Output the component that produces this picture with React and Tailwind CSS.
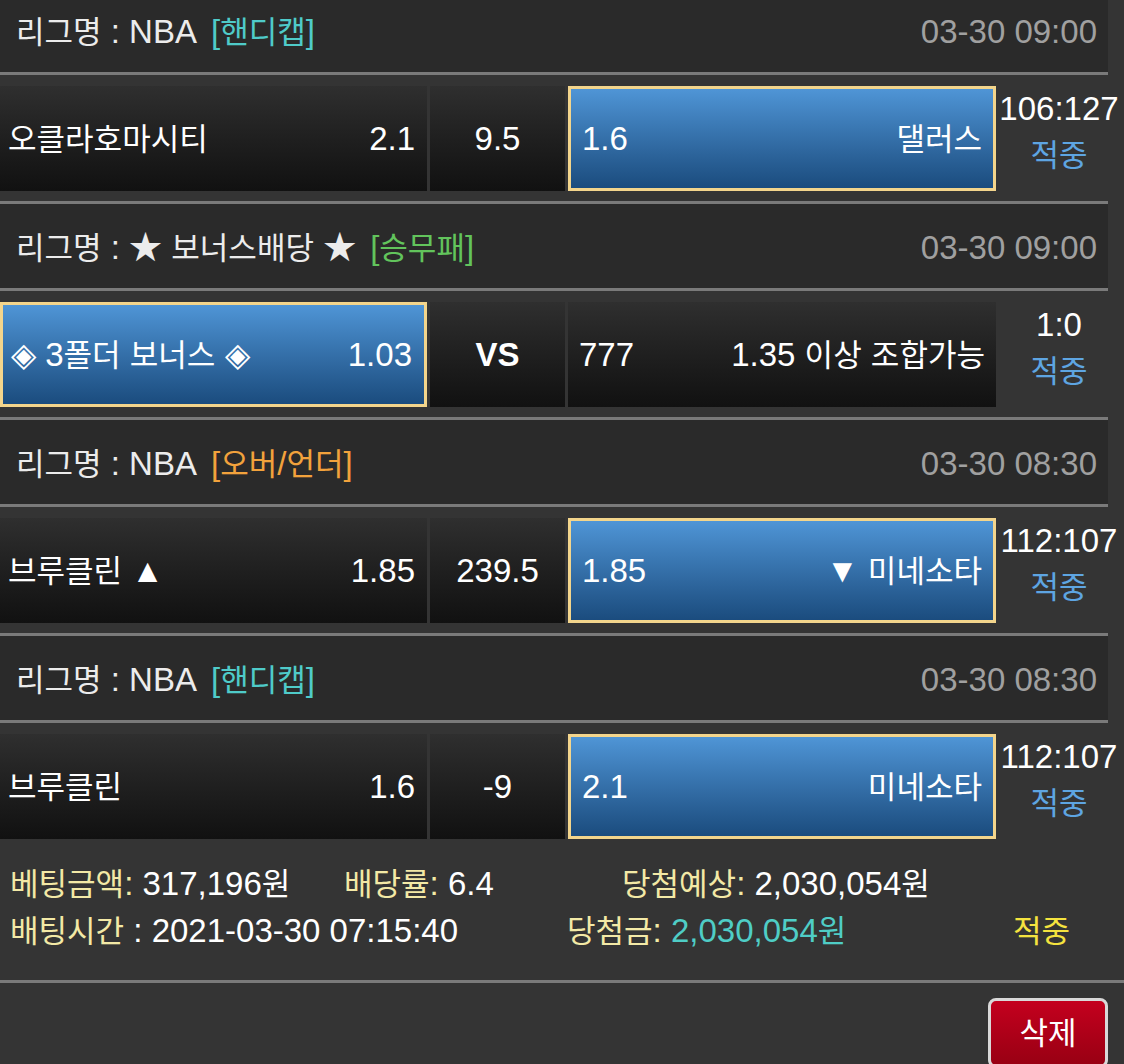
import React from 'react';

const HANGUL = /([\uac00-\ud7a3]+)/;

// hangul runs a bit smaller so they sit with the digits like the phone font does
const Txt = ({ children }) => (
    <>
        {String(children).split(HANGUL).map((part, i) =>
            HANGUL.test(part) ? <span key={i} className="text-[0.94em]">{part}</span> : part
        )}
    </>
);

const bets = [
    { league: 'NBA', type: '핸디캡', typeColor: 'text-[#4fcbc9]', time: '03-30 09:00', home: '오클라호마시티', homeOdds: '2.1', mid: '9.5', awayOdds: '1.6', away: '댈러스', pick: 'away', score: '106:127' },
    { league: '★ 보너스배당 ★', type: '승무패', typeColor: 'text-[#62c45c]', time: '03-30 09:00', home: '◈ 3폴더 보너스 ◈', homeOdds: '1.03', mid: 'VS', awayOdds: '777', away: '1.35 이상 조합가능', pick: 'home', score: '1:0' },
    { league: 'NBA', type: '오버/언더', typeColor: 'text-[#f2a23c]', time: '03-30 08:30', home: '브루클린 ▲', homeOdds: '1.85', mid: '239.5', awayOdds: '1.85', away: '▼ 미네소타', pick: 'away', score: '112:107' },
    { league: 'NBA', type: '핸디캡', typeColor: 'text-[#4fcbc9]', time: '03-30 08:30', home: '브루클린', homeOdds: '1.6', mid: '-9', awayOdds: '2.1', away: '미네소타', pick: 'away', score: '112:107' },
];

const darkCell = 'bg-linear-to-b from-[#2f2f2f] to-[#111111]';
const pickedCell = 'bg-linear-to-b from-[#4f95d6] to-[#1b4c7e] border-[3px] border-[#f3d58c]';

const BetRow = ({ bet }) => (
    <div>
        <div className="w-[1108px] h-[90px] bg-[#2a2a2a] border-y-[3px] border-[#7a7a7a] flex items-center justify-between pt-[3px] pl-4 pr-[11px]">
            <div className="text-[#ececec]">
                <Txt>{`리그명 : ${bet.league}`}</Txt>
                <span className={`ml-[14px] ${bet.typeColor}`}>[<Txt>{bet.type}</Txt>]</span>
            </div>
            <div className="text-[#a0a0a0]">{bet.time}</div>
        </div>

        <div className="flex gap-[3px] pt-[11px] pb-[10px]">
            <div className={`w-[427px] h-[105px] flex items-center justify-between pl-2 pr-3 ${bet.pick === 'home' ? pickedCell : darkCell}`}>
                <span><Txt>{bet.home}</Txt></span>
                <span>{bet.homeOdds}</span>
            </div>
            <div className={`w-[135px] h-[105px] flex items-center justify-center ${darkCell} ${bet.mid === 'VS' ? 'font-bold' : ''}`}>
                {bet.mid}
            </div>
            <div className={`w-[428px] h-[105px] flex items-center justify-between pl-[11px] pr-[11px] ${bet.pick === 'away' ? pickedCell : darkCell}`}>
                <span>{bet.awayOdds}</span>
                <span><Txt>{bet.away}</Txt></span>
            </div>
            <div className="flex-1 flex flex-col items-center leading-[46px] pr-[5px]">
                <span>{bet.score}</span>
                <span className="text-[#5ea5e2]"><Txt>적중</Txt></span>
            </div>
        </div>
    </div>
);

export default function App() {
    return (
        <div className="w-[1124px] h-[1064px] overflow-hidden bg-[#343434] text-white text-[33px] font-['Liberation_Sans','Noto_Sans_CJK_KR',sans-serif]">
            <div className="-mt-[15px]">
                {bets.map((bet, idx) => (
                    <BetRow key={idx} bet={bet} />
                ))}
            </div>

            <div className="h-[131px] pt-[12px] pl-[10px] leading-[46px]">
                <div className="flex">
                    <div className="w-[334px]">
                        <span className="text-[#f3e9a6]"><Txt>베팅금액:</Txt></span> <Txt>317,196원</Txt>
                    </div>
                    <div className="w-[278px]">
                        <span className="text-[#f3e9a6]"><Txt>배당률:</Txt></span> 6.4
                    </div>
                    <div>
                        <span className="text-[#f3e9a6]"><Txt>당첨예상:</Txt></span> <Txt>2,030,054원</Txt>
                    </div>
                </div>
                <div className="flex">
                    <div className="w-[557px]">
                        <span className="text-[#f3e9a6]"><Txt>배팅시간</Txt></span> : 2021-03-30 07:15:40
                    </div>
                    <div className="w-[446px]">
                        <span className="text-[#f3e9a6]"><Txt>당첨금:</Txt></span>{' '}
                        <span className="text-[#4fcdc6]"><Txt>2,030,054원</Txt></span>
                    </div>
                    <div className="text-[#f4e33f]"><Txt>적중</Txt></div>
                </div>
            </div>

            <div className="border-t-[3px] border-[#7a7a7a] flex justify-end pt-[15px] pr-4">
                <button className="w-[120px] h-[70px] rounded-lg border-[3px] border-[#d9d9d9] bg-linear-to-b from-[#c4001e] to-[#980013] text-white text-[33px] leading-none">
                    <Txt>삭제</Txt>
                </button>
            </div>
        </div>
    );
}
